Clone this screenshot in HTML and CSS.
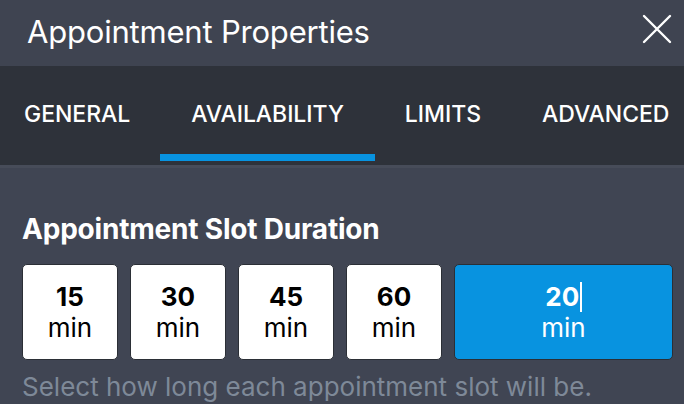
FILE: index.html
```html
<!DOCTYPE html>
<html>
<head>
<meta charset="utf-8">
<link rel="stylesheet" href="styles.css">
</head>
<body>
<div class="dialog">
  <header class="header">
    <h1 class="title">Appointment Properties</h1>
    <button class="close" aria-label="Close">
      <svg width="30" height="30" viewBox="0 0 30 30"><path d="M2 2 L28 28 M28 2 L2 28" stroke="#ffffff" stroke-width="2.4" stroke-linecap="round" fill="none"/></svg>
    </button>
  </header>
  <nav class="tabs">
    <div class="tab">GENERAL</div>
    <div class="tab active">AVAILABILITY</div>
    <div class="tab">LIMITS</div>
    <div class="tab">ADVANCED</div>
  </nav>
  <section class="content">
    <h2 class="section-title">Appointment Slot Duration</h2>
    <div class="slots">
      <div class="slot"><span class="num">15</span><span class="unit">min</span></div>
      <div class="slot"><span class="num">30</span><span class="unit">min</span></div>
      <div class="slot"><span class="num">45</span><span class="unit">min</span></div>
      <div class="slot"><span class="num">60</span><span class="unit">min</span></div>
      <div class="slot custom"><span class="num">20<span class="caret"></span></span><span class="unit">min</span></div>
    </div>
    <p class="help">Select how long each appointment slot will be.</p>
  </section>
</div>
</body>
</html>
```

FILE: styles.css
```css
html, body {
  margin: 0;
  padding: 0;
}
body {
  background: #404553;
  font-family: Inter, "Noto Sans", sans-serif;
  color: #ffffff;
  width: 684px;
  height: 404px;
  overflow: hidden;
}
.header {
  height: 66px;
  background: #3f4451;
  display: flex;
  align-items: center;
  justify-content: space-between;
  padding: 0 12px 0 27px;
}
.title {
  margin: 0;
  font-size: 31px;
  font-weight: 400;
  letter-spacing: -0.2px;
  padding-bottom: 4px;
}
.close {
  background: none;
  border: 0;
  padding: 0;
  width: 30px;
  height: 30px;
  display: flex;
  margin-bottom: 9px;
}
.tabs {
  height: 99px;
  background: #2e323a;
  border-bottom: 3px solid #474c59;
  display: flex;
  align-items: center;
  gap: 61px;
  padding-left: 24px;
}
.tab {
  position: relative;
  font-size: 23px;
  font-weight: 500;
  letter-spacing: -0.05px;
  padding-bottom: 4px;
  white-space: nowrap;
}
.tab.active::after {
  content: "";
  position: absolute;
  left: -31px;
  right: -31px;
  top: 54px;
  height: 7px;
  background: #0893e0;
}
.content {
  padding: 44px 11px 0 22px;
}
.section-title {
  margin: 0;
  font-size: 28px;
  font-weight: 700;
  letter-spacing: -0.2px;
  line-height: 34px;
}
.slots {
  display: flex;
  gap: 12px;
  margin-top: 18px;
}
.slot {
  width: 96px;
  height: 96px;
  box-sizing: border-box;
  background: #ffffff;
  border: 1px solid #2b2f36;
  border-radius: 5px;
  color: #000000;
  display: flex;
  flex-direction: column;
  align-items: center;
  justify-content: center;
  font-size: 26px;
  line-height: 31px;
}
.slot.custom {
  flex: 1;
  background: #0893e0;
  color: #ffffff;
}
.num {
  font-weight: 700;
  position: relative;
}
.unit {
  font-weight: 400;
}
.caret {
  display: inline-block;
  width: 1.5px;
  height: 30px;
  background: #ffffff;
  vertical-align: -6px;
  margin-left: 1px;
}
.help {
  margin: 11px 0 0;
  font-size: 26px;
  color: #7e8998;
  white-space: nowrap;
}
```
